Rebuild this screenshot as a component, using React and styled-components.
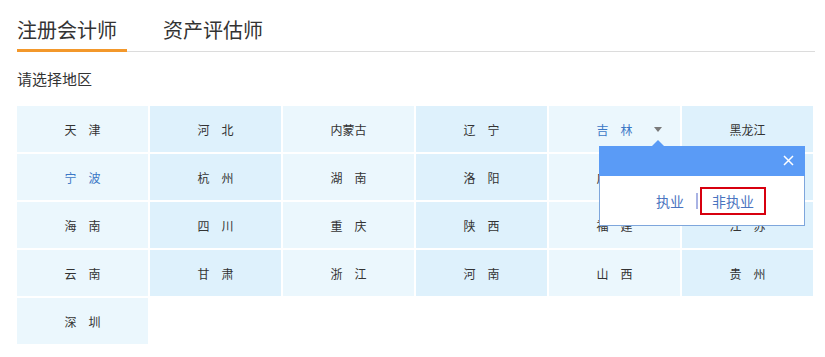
import React from 'react'
import styled, { createGlobalStyle } from 'styled-components'

const GlobalStyle = createGlobalStyle`
  body {
    margin: 0;
    background: #fff;
    font-family: "Noto Sans CJK SC", "Noto Sans", sans-serif;
    color: #333;
  }
`

const Page = styled.div`
  width: 798px;
  padding: 0 10px 0 17px;
`

const Tabs = styled.div`
  display: flex;
  gap: 36px;
  height: 51px;
  border-bottom: 1px solid #dcdcdc;
`

const Tab = styled.div`
  width: ${p => p.width}px;
  box-sizing: border-box;
  padding-top: 16px;
  height: 52px;
  font-size: 20px;
  line-height: 28px;
  color: #333;
  border-bottom: 3px solid ${p => (p.active ? '#f3982b' : 'transparent')};
  margin-bottom: -1px;
`

const Heading = styled.div`
  margin-top: 16px;
  font-size: 15px;
  line-height: 22px;
  color: #333;
`

const Grid = styled.div`
  margin-top: 16px;
  width: 796px;
  display: grid;
  grid-template-columns: repeat(6, 131px);
  grid-auto-rows: 46px;
  gap: 2px;
`

const Cell = styled.div`
  position: relative;
  display: flex;
  align-items: center;
  justify-content: center;
  font-size: 12px;
  color: ${p => (p.selected ? '#3b78c6' : '#333')};
  background: ${p => (p.dark ? '#def1fc' : '#ebf7fd')};
`

const Caret = styled.span`
  position: absolute;
  left: 105px;
  top: 21px;
  width: 0;
  height: 0;
  border-left: 4px solid transparent;
  border-right: 4px solid transparent;
  border-top: 5px solid #7a7a7a;
`

const Popup = styled.div`
  position: absolute;
  left: 50px;
  top: 40px;
  width: 206px;
  z-index: 2;
  border: 1px solid #7ea6dc;
  border-top: none;
  background: #fff;
  box-sizing: border-box;
`

const PopupHead = styled.div`
  position: relative;
  height: 30px;
  margin: 0 -1px;
  background: #5a9bf6;
  &::before {
    content: '';
    position: absolute;
    left: 53px;
    top: -6px;
    border-left: 6px solid transparent;
    border-right: 6px solid transparent;
    border-bottom: 6px solid #5a9bf6;
  }
`

const Close = styled.span`
  position: absolute;
  right: 11px;
  top: 9px;
  width: 11px;
  height: 11px;
  display: flex;
`

const PopupBody = styled.div`
  height: 49px;
  display: flex;
  align-items: center;
  padding-left: 54px;
  font-size: 14px;
  color: #4a74c0;
`

const Option = styled.span`
  box-sizing: border-box;
  height: 28px;
  line-height: 24px;
  padding: 0 ${p => (p.boxed ? 10 : 0)}px;
  border: 2px solid ${p => (p.boxed ? '#d7000f' : 'transparent')};
`

const Divider = styled.span`
  width: 2px;
  height: 16px;
  margin: 0 2px 0 10px;
  background: #a9b3e4;
`

const regions = [
  '天\u3000津', '河\u3000北', '内蒙古', '辽\u3000宁', '吉\u3000林', '黑龙江',
  '宁\u3000波', '杭\u3000州', '湖\u3000南', '洛\u3000阳', '广\u3000东', '广\u3000西',
  '海\u3000南', '四\u3000川', '重\u3000庆', '陕\u3000西', '福\u3000建', '江\u3000苏',
  '云\u3000南', '甘\u3000肃', '浙\u3000江', '河\u3000南', '山\u3000西', '贵\u3000州',
  '深\u3000圳'
]

const CloseIcon = () => (
  <svg width="11" height="11" viewBox="0 0 11 11">
    <path d="M1 1 L10 10 M10 1 L1 10" stroke="#fff" strokeWidth="1.5" fill="none" />
  </svg>
)

const App = () => (
  <Page>
    <GlobalStyle />
    <Tabs>
      <Tab width={110} active>注册会计师</Tab>
      <Tab width={110}>资产评估师</Tab>
    </Tabs>
    <Heading>请选择地区</Heading>
    <Grid>
      {regions.map((name, i) => (
        <Cell key={i} dark={i % 2 === 1} selected={i === 4 || i === 6}>
          {name}
          {i === 4 && (
            <>
              <Caret />
              <Popup>
                <PopupHead>
                  <Close><CloseIcon /></Close>
                </PopupHead>
                <PopupBody>
                  <Option>执业</Option>
                  <Divider />
                  <Option boxed>非执业</Option>
                </PopupBody>
              </Popup>
            </>
          )}
        </Cell>
      ))}
    </Grid>
  </Page>
)

export default App
